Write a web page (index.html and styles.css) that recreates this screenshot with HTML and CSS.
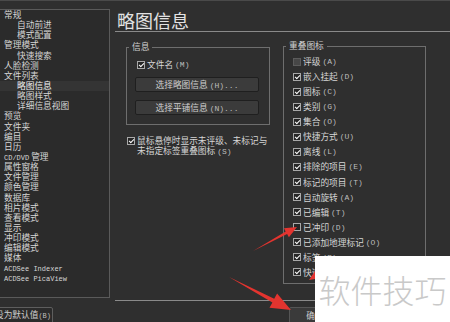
FILE: index.html
```html
<!DOCTYPE html>
<html lang="zh-CN">
<head>
    <meta charset="UTF-8">
    <title>略图信息</title>
    <link rel="stylesheet" href="styles.css">
</head>
<body>
    <div class="window">
        <div class="main">
            <ul class="tree">
                <li>常规</li>
                <li class="sub">自动前进</li>
                <li class="sub">模式配置</li>
                <li>管理模式</li>
                <li class="sub">快速搜索</li>
                <li>人脸检测</li>
                <li>文件列表</li>
                <li class="sub selected">略图信息</li>
                <li class="sub">略图样式</li>
                <li class="sub">详细信息视图</li>
                <li>预览</li>
                <li>文件夹</li>
                <li>编目</li>
                <li>日历</li>
                <li><span class="latin">CD/DVD</span> 管理</li>
                <li>属性窗格</li>
                <li>文件管理</li>
                <li>颜色管理</li>
                <li>数据库</li>
                <li>相片模式</li>
                <li>查看模式</li>
                <li>显示</li>
                <li>冲印模式</li>
                <li>编辑模式</li>
                <li>媒体</li>
                <li class="latin">ACDSee Indexer</li>
                <li class="latin">ACDSee PicaView</li>
            </ul>

            <div class="pane">
                <h1 class="title">略图信息</h1>
                <div class="content">
                    <div class="col-info">
                        <fieldset class="group group-info">
                            <legend>信息</legend>
                            <label class="check"><span class="box on"></span>文件名<span class="key">(M)</span></label>
                            <button class="btn">选择略图信息<span class="key">(H)...</span></button>
                            <button class="btn btn-second">选择平铺信息<span class="key">(N)...</span></button>
                        </fieldset>
                        <label class="check hover-opt">
                            <span class="box on"></span>
                            <span class="wrap-text">鼠标悬停时显示未评级、未标记与未指定标签重叠图标<span class="key">(S)</span></span>
                        </label>
                    </div>

                    <fieldset class="group group-overlay">
                        <legend>重叠图标</legend>
                        <label class="opt"><span class="box disabled"></span>评级<span class="key">(A)</span></label>
                        <label class="opt"><span class="box on"></span>嵌入挂起<span class="key">(D)</span></label>
                        <label class="opt"><span class="box on"></span>图标<span class="key">(C)</span></label>
                        <label class="opt"><span class="box on"></span>类别<span class="key">(G)</span></label>
                        <label class="opt"><span class="box on"></span>集合<span class="key">(O)</span></label>
                        <label class="opt"><span class="box on"></span>快捷方式<span class="key">(U)</span></label>
                        <label class="opt"><span class="box on"></span>离线<span class="key">(L)</span></label>
                        <label class="opt"><span class="box on"></span>排除的项目<span class="key">(E)</span></label>
                        <label class="opt"><span class="box on"></span>标记的项目<span class="key">(T)</span></label>
                        <label class="opt"><span class="box on"></span>自动旋转<span class="key">(A)</span></label>
                        <label class="opt"><span class="box on"></span>已编辑<span class="key">(T)</span></label>
                        <label class="opt"><span class="box"></span>已冲印<span class="key">(D)</span></label>
                        <label class="opt"><span class="box on"></span>已添加地理标记<span class="key">(O)</span></label>
                        <label class="opt"><span class="box on"></span>标签<span class="key">(B)</span></label>
                        <label class="opt"><span class="box on"></span>快速查看<span class="key">(Q)</span></label>
                    </fieldset>
                </div>
            </div>
        </div>

        <div class="footer">
            <button class="btn btn-default">设为默认值<span class="key">(B)</span></button>
            <div class="actions">
                <button class="btn btn-ok">确定</button>
                <button class="btn btn-ok">取消</button>
            </div>
        </div>

        <svg class="arrows" width="450" height="322" viewBox="0 0 450 322">
            <polygon points="253,250 287.1,233.1 288.9,236.3 297,226 283.9,227.3 285.7,230.5" />
            <polygon points="229,276 274.2,297.8 277.1,292.5 291,309 269.5,306.7 272.4,301.4" />
            <polygon points="315,270 315,278 309,279" />
        </svg>

        <div class="watermark">软件技巧</div>
    </div>
</body>
</html>
```

FILE: styles.css
```css
body {
    margin: 0;
    background-color: #2f2f2f;
    color: #d6d6d6;
    font-family: "Noto Sans CJK SC", "Liberation Sans", sans-serif;
    font-size: 8.7px;
}
.window {
    position: relative;
    width: 450px;
    height: 322px;
    overflow: hidden;
    box-sizing: border-box;
    border-top: 1px solid #4a4a4a;
}
.main {
    display: flex;
    padding-top: 8px;
}

/* left category tree */
.tree {
    list-style: none;
    margin: 0;
    padding: 0;
    width: 110px;
    height: 289px;
    box-sizing: border-box;
    border: 1px solid #5a5a5a;
    border-left: none;
    background-color: #2b2b2b;
    overflow: hidden;
}
.tree li {
    line-height: 10.15px;
    height: 10.15px;
    padding-left: 4px;
    white-space: nowrap;
}
.tree li.sub {
    padding-left: 17px;
}
.tree li.selected {
    color: #f0f0f0;
    background-color: #343434;
}
.latin {
    font-family: "Liberation Mono", monospace;
    font-size: 7px;
}

/* right pane */
.pane {
    flex: 1;
    margin-left: 5px;
    height: 292px;
    box-sizing: border-box;
    border-bottom: 1px solid #8a8a8a;
}
.title {
    margin: 0;
    padding-left: 2px;
    height: 22px;
    line-height: 22px;
    font-size: 18px;
    font-weight: normal;
    color: #e2e2e2;
    border-bottom: 1px solid #8a8a8a;
}
.content {
    display: flex;
    align-items: flex-start;
}
.col-info {
    margin-left: 11px;
    margin-top: 10px;
    width: 144px;
}
.group {
    margin: 0;
    min-width: 0;
    box-sizing: border-box;
    border: 1px solid #6e6e6e;
}
.group legend {
    margin-left: 2px;
    padding: 0 3px;
    line-height: 10px;
    color: #d0d0d0;
}
.group-info {
    width: 144px;
    padding: 7px 0 9px 0;
}
.group-overlay {
    width: 143px;
    height: 243px;
    margin-left: 13px;
    margin-top: 9px;
    padding: 3px 0 0 0;
}

.key {
    font-family: "Liberation Mono", monospace;
    font-size: 8px;
    margin-left: 2px;
    color: #bdbdbd;
}

/* checkboxes */
.box {
    position: relative;
    display: inline-block;
    flex: none;
    width: 8px;
    height: 8px;
    box-sizing: border-box;
    border: 1px solid #a8a8a8;
    background-color: #262626;
    margin-right: 2px;
}
.box.on::after {
    content: '';
    position: absolute;
    left: 2px;
    top: 0;
    width: 2px;
    height: 4px;
    border: solid #ffffff;
    border-width: 0 1px 1px 0;
    transform: rotate(45deg);
}
.box.disabled {
    border-color: #5c5c5c;
    background-color: #474747;
}
.check {
    display: flex;
    align-items: center;
    height: 12px;
    line-height: 12px;
    margin-left: 10px;
    white-space: nowrap;
}
.hover-opt {
    align-items: flex-start;
    height: auto;
    line-height: 10px;
    margin-left: 1px;
    margin-top: 11px;
    white-space: normal;
}
.hover-opt .box {
    margin-top: 1px;
}
.wrap-text {
    width: 132px;
}
.opt {
    display: flex;
    align-items: center;
    height: 15.07px;
    margin-left: 9px;
    white-space: nowrap;
}

/* buttons */
.btn {
    display: block;
    font-family: inherit;
    font-size: 8.7px;
    color: #cfcfcf;
    background-color: #3b3b3b;
    border: 1px solid #1f1f1f;
    border-radius: 2px;
    padding: 0;
    height: 15px;
    line-height: 13px;
    white-space: nowrap;
}
.group-info .btn {
    width: 124px;
    margin: 6px 0 0 8px;
}
.group-info .btn-second {
    margin-top: 8px;
}

/* footer */
.footer {
    display: flex;
    align-items: flex-start;
    padding-top: 6px;
}
.btn-default {
    margin-left: -8px;
    width: 61px;
    height: 17px;
    padding-right: 1px;
    text-align: right;
    background-color: #2b2b2b;
    border-color: #5e5e5e;
}
.btn-default .key {
    font-size: 7px;
    margin-left: 0;
}
.actions {
    display: flex;
    gap: 6px;
    margin-left: 236px;
}
.btn-ok {
    width: 52px;
    height: 17px;
    background-color: #3a3a3a;
    border-color: #555555;
}

/* annotation overlays */
.arrows {
    position: absolute;
    left: 0;
    top: 0;
    pointer-events: none;
}
.arrows polygon {
    fill: #e3342f;
}
.watermark {
    position: absolute;
    left: 315px;
    top: 255px;
    right: 0;
    bottom: 0;
    background-color: #ffffff;
    color: #c9c9c9;
    font-size: 32px;
    font-weight: 300;
    display: flex;
    align-items: center;
    justify-content: center;
}
```
